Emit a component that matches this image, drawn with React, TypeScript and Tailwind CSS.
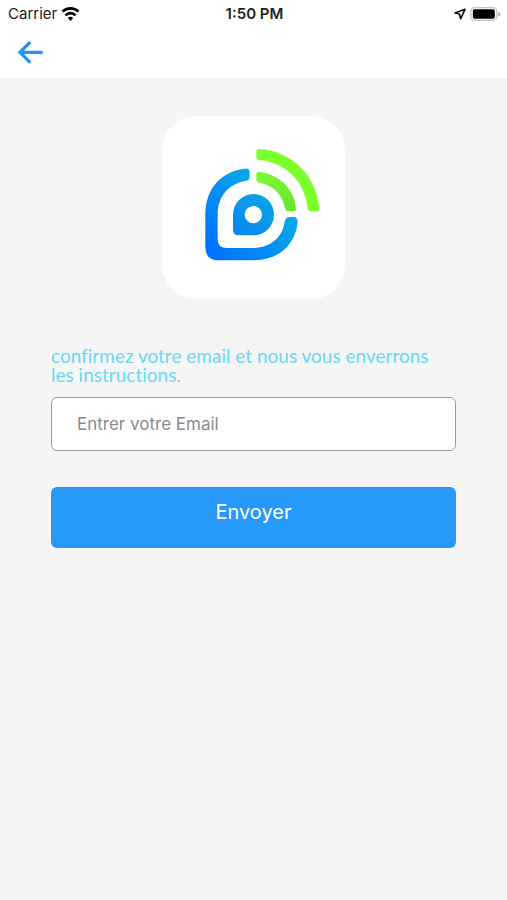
import { useState } from "react";

function StatusBar() {
  return (
    <div className="grid grid-cols-3 items-center h-7 pl-2 pr-1.5 text-[15px] text-[#222]">
      <div className="flex items-center gap-1">
        <span>Carrier</span>
        <svg viewBox="0 0 54 42" className="w-[19px] h-[14px]" fill="none" stroke="#000" strokeWidth="8" aria-hidden="true">
          <path d="M3 14 C16 1 38 1 51 14" />
          <path d="M12 25 C20 16 34 16 42 25" />
          <path d="M19 33 L27 42 L35 33 C30 28 24 28 19 33 Z" fill="#000" stroke="none" />
        </svg>
      </div>
      <span className="text-center font-semibold">1:50 PM</span>
      <div className="flex items-center justify-end gap-1">
        <svg viewBox="0 0 36 36" className="w-3 h-3" fill="none" stroke="#111" strokeWidth="5" strokeLinejoin="round" aria-hidden="true">
          <path d="M33 4 L3 15 L16 18 L20 32 Z" />
        </svg>
        <svg viewBox="0 0 92 42" className="w-[31px] h-[14px]" aria-hidden="true">
          <rect x="2" y="2" width="78" height="38" rx="11" fill="#fff" stroke="#c4c4c4" strokeWidth="4" />
          <rect x="8" y="7" width="66" height="28" rx="5" fill="#000" />
          <path d="M84 14 Q92 16 92 21 Q92 26 84 28 Z" fill="#b5b5b5" />
        </svg>
      </div>
    </div>
  );
}

function Logo() {
  return (
    <svg viewBox="22 18 549 549" className="w-full h-full" role="img" aria-label="Logo">
      <defs>
        <linearGradient id="blue" gradientUnits="userSpaceOnUse" x1="175" y1="430" x2="360" y2="250">
          <stop offset="0" stopColor="#0070ff" />
          <stop offset="1" stopColor="#06ace6" />
        </linearGradient>
        <linearGradient id="pin" gradientUnits="userSpaceOnUse" x1="235" y1="376" x2="358" y2="252">
          <stop offset="0" stopColor="#0784f4" />
          <stop offset="1" stopColor="#0ba8e2" />
        </linearGradient>
        <linearGradient id="green" gradientUnits="userSpaceOnUse" x1="400" y1="300" x2="320" y2="190">
          <stop offset="0" stopColor="#6ae62c" />
          <stop offset="1" stopColor="#7cfa30" />
        </linearGradient>
      </defs>
      <path
        fill="url(#blue)"
        d="M269 176 Q285 174 285 188 V200 Q285 210 274 212 C222 221 189 258 189 315 V386 Q189 414 217 414 H295 C345 414 382 385 390 337 Q392 321 406 321 H415 Q429 321 429 336 C423 405 371 451 295 451 H192 Q152 451 152 411 V315 C152 238 197 185 269 176 Z"
      />
      <path
        fill="url(#pin)"
        fillRule="evenodd"
        d="M297 252 A61 62 0 0 1 297 376 H252 Q235 376 235 359 V314 A62 62 0 0 1 297 252 Z M296 288 A26 26 0 1 0 296 340 A26 26 0 1 0 296 288 Z"
      />
      <path
        fill="url(#green)"
        d="M305 193 Q305 185 314 186 C374 193 419 237 424 295 Q425 304 416 304 H401 Q393 304 391 295 C384 253 354 224 313 218 Q305 216 305 208 Z"
      />
      <path
        fill="#7dff2c"
        d="M305 125 Q305 117 314 117 C411 122 486 198 494 295 Q495 304 486 304 H468 Q460 304 459 295 C451 215 393 156 313 150 Q305 149 305 141 Z"
      />
    </svg>
  );
}

export default function App() {
  const [email, setEmail] = useState("");

  return (
    <div className="min-h-screen bg-[#f5f5f5] font-['Inter',sans-serif]">
      <header className="bg-white">
        <StatusBar />
        <div className="flex items-center h-[50px] px-4">
          <button type="button" aria-label="Retour" className="flex items-center w-7 h-12">
            <svg viewBox="0 0 84 72" className="w-7 h-6" fill="none" stroke="#2492fb" strokeWidth="10" aria-hidden="true">
              <path d="M80 34 H13 M43 3 L12 34 L43 65" />
            </svg>
          </button>
        </div>
      </header>

      <main className="px-[51px] pt-[38px]">
        <div className="mx-auto size-[183px] rounded-[34px] bg-white overflow-hidden">
          <Logo />
        </div>

        <form onSubmit={(e) => e.preventDefault()} className="mt-[47px]">
          <label htmlFor="email" className="block font-['Lato',sans-serif] text-[19px] leading-[19px] [font-variant-ligatures:none] text-[#6bd6f6]">
            confirmez votre email et nous vous enverrons les instructions.
          </label>
          <input
            id="email"
            type="email"
            value={email}
            onChange={(e) => setEmail(e.target.value)}
            placeholder="Entrer votre Email"
            className="block mt-[13px] w-full h-[54px] rounded-md border border-[#999] bg-white px-[25px] text-[17px] text-[#333] placeholder:text-[#8a8a8a] outline-none"
          />
          <button type="submit" className="block mt-9 w-full rounded-md bg-[#2699fb] pt-3 pb-[22px] text-xl leading-[27px] text-white">
            Envoyer
          </button>
        </form>
      </main>
    </div>
  );
}
